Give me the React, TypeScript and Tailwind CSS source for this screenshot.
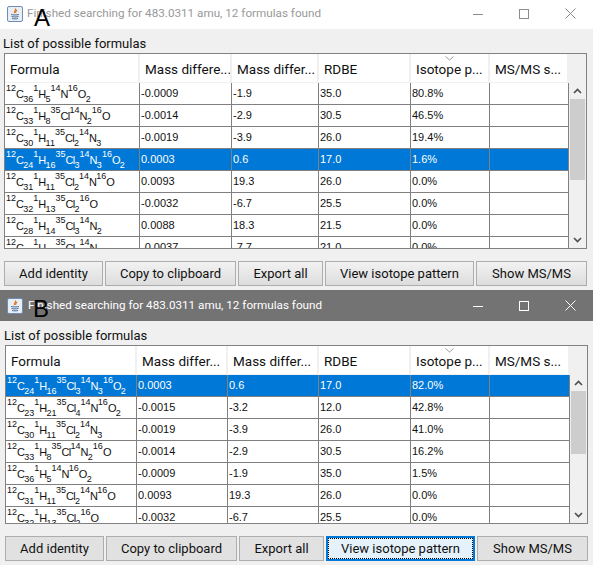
import { ReactNode } from "react";

type Part = [string, string, string?];
type Row = { formula: Part[]; d1: string; d2: string; rdbe: string; iso: string; selected?: boolean };

const F = (s: string): Part[] =>
  s.split(" ").map(p => {
    const [m, e, c] = p.split("-");
    return [m, e, c] as Part;
  });

const rowsA: Row[] = [
  { formula: F("12-C-36 1-H-5 14-N 16-O-2"), d1: "-0.0009", d2: "-1.9", rdbe: "35.0", iso: "80.8%" },
  { formula: F("12-C-33 1-H-8 35-Cl 14-N-2 16-O"), d1: "-0.0014", d2: "-2.9", rdbe: "30.5", iso: "46.5%" },
  { formula: F("12-C-30 1-H-11 35-Cl-2 14-N-3"), d1: "-0.0019", d2: "-3.9", rdbe: "26.0", iso: "19.4%" },
  { formula: F("12-C-24 1-H-16 35-Cl-3 14-N-3 16-O-2"), d1: "0.0003", d2: "0.6", rdbe: "17.0", iso: "1.6%", selected: true },
  { formula: F("12-C-31 1-H-11 35-Cl-2 14-N 16-O"), d1: "0.0093", d2: "19.3", rdbe: "26.0", iso: "0.0%" },
  { formula: F("12-C-32 1-H-13 35-Cl-2 16-O"), d1: "-0.0032", d2: "-6.7", rdbe: "25.5", iso: "0.0%" },
  { formula: F("12-C-28 1-H-14 35-Cl-3 14-N-2"), d1: "0.0088", d2: "18.3", rdbe: "21.5", iso: "0.0%" },
  { formula: F("12-C-29 1-H-16 35-Cl-3 14-N"), d1: "-0.0037", d2: "-7.7", rdbe: "21.0", iso: "0.0%" },
];

const rowsB: Row[] = [
  { formula: F("12-C-24 1-H-16 35-Cl-3 14-N-3 16-O-2"), d1: "0.0003", d2: "0.6", rdbe: "17.0", iso: "82.0%", selected: true },
  { formula: F("12-C-23 1-H-21 35-Cl-4 14-N 16-O-2"), d1: "-0.0015", d2: "-3.2", rdbe: "12.0", iso: "42.8%" },
  { formula: F("12-C-30 1-H-11 35-Cl-2 14-N-3"), d1: "-0.0019", d2: "-3.9", rdbe: "26.0", iso: "41.0%" },
  { formula: F("12-C-33 1-H-8 35-Cl 14-N-2 16-O"), d1: "-0.0014", d2: "-2.9", rdbe: "30.5", iso: "16.2%" },
  { formula: F("12-C-36 1-H-5 14-N 16-O-2"), d1: "-0.0009", d2: "-1.9", rdbe: "35.0", iso: "1.5%" },
  { formula: F("12-C-31 1-H-11 35-Cl-2 14-N 16-O"), d1: "0.0093", d2: "19.3", rdbe: "26.0", iso: "0.0%" },
  { formula: F("12-C-32 1-H-13 35-Cl-2 16-O"), d1: "-0.0032", d2: "-6.7", rdbe: "25.5", iso: "0.0%" },
];

const JavaIcon = () => (
  <svg width="16" height="16" viewBox="0 0 16 16" className="shrink-0">
    <rect x="0.5" y="0.5" width="15" height="15" rx="1.5" fill="#e8eef6" stroke="#6f8db5" />
    <path d="M8.5 2.5c1 1.5-2 2.5-1 4.5M10 4c-1 1-2 1.500-1.200 3" fill="none" stroke="#e2761b" strokeWidth="1.200" />
    <path d="M4 8.500c2 .6 6 .6 8 0M4.500 10.500c2 .6 5 .6 7 0M5 12.500c2 .5 4 .5 6 0" fill="none" stroke="#4a6a94" strokeWidth="1" />
  </svg>
);

const WindowControls = ({ color }: { color: string }) => (
  <div className="flex ml-auto">
    <div className="w-[46px] flex items-center justify-center">
      <svg width="10" height="10" viewBox="0 0 10 10">
        <path d="M0 5.500h10" stroke={color} />
      </svg>
    </div>
    <div className="w-[46px] flex items-center justify-center">
      <svg width="10" height="10" viewBox="0 0 10 10">
        <rect x="0.500" y="0.500" width="9" height="9" fill="none" stroke={color} />
      </svg>
    </div>
    <div className="w-[46px] flex items-center justify-center">
      <svg width="11" height="11" viewBox="0 0 11 11">
        <path d="M.5.500l10 10M10.500.500l-10 10" stroke={color} />
      </svg>
    </div>
  </div>
);

const Formula = ({ parts }: { parts: Part[] }) => (
  <span className="whitespace-nowrap font-['Liberation_Sans',sans-serif] text-[11px] tracking-[-0.700px] leading-none">
    {parts.map(([mass, el, count], i) => (
      <span key={i}>
        <span className="text-[9px] tracking-normal align-[7px] leading-none">{mass}</span>
        <span>{el}</span>
        {count && <span className="text-[9px] tracking-normal align-[-4px] leading-none">{count}</span>}
      </span>
    ))}
  </span>
);

const Chevron = ({ down }: { down?: boolean }) => (
  <svg width="9" height="6" viewBox="0 0 9 6">
    <path d={down ? "M1 1l3.500 3.500L8 1" : "M1 5l3.500-3.500L8 5"} fill="none" stroke="#505050" strokeWidth="1.700" />
  </svg>
);

const HeaderCell = ({ children, sort }: { children: ReactNode; sort?: boolean }) => (
  <div className="relative bg-white border-r-2 border-[#f0f0f0] pl-[5px] pt-[2px] flex items-center overflow-hidden whitespace-nowrap h-[28px]">
    {sort && (
      <svg width="9" height="5" viewBox="0 0 9 5" className="absolute left-[34px] top-[2px]">
        <path d="M.5.500l4 3.500 4-3.500" fill="none" stroke="#9a9a9a" />
      </svg>
    )}
    {children}
  </div>
);

const Cell = ({ children }: { children?: ReactNode }) => (
  <div className="border-r border-[#808080] pl-[1px] flex items-center overflow-hidden">{children}</div>
);

const Table = ({
  rows,
  cols,
  heightClass,
  thumbClass,
  firstHeader,
}: {
  rows: Row[];
  cols: string;
  heightClass: string;
  thumbClass: string;
  firstHeader: string;
}) => (
  <div className={`flex border border-[#828282] bg-[#f0f0f0] ${heightClass}`}>
    <div className="flex-1 min-w-0 overflow-hidden">
      <div className={`grid ${cols} h-[29px] text-[13.500px] text-[#111] font-['Roboto',sans-serif] bg-[#f0f0f0]`}>
        <HeaderCell>Formula</HeaderCell>
        <HeaderCell>{firstHeader}</HeaderCell>
        <HeaderCell>Mass differ...</HeaderCell>
        <HeaderCell>RDBE</HeaderCell>
        <HeaderCell sort>Isotope p...</HeaderCell>
        <HeaderCell>MS/MS s...</HeaderCell>
      </div>
      {rows.map((r, i) => (
        <div
          key={i}
          className={`grid ${cols} h-[22px] border-b border-[#808080] text-[11px] font-['Liberation_Sans',sans-serif] ${
            r.selected ? "bg-[#0078d7] text-white" : "bg-white text-[#111]"
          }`}
        >
          <Cell>
            <Formula parts={r.formula} />
          </Cell>
          <Cell>{r.d1}</Cell>
          <Cell>{r.d2}</Cell>
          <Cell>{r.rdbe}</Cell>
          <Cell>{r.iso}</Cell>
          <Cell />
        </div>
      ))}
    </div>
    <div className="w-[17px] flex flex-col items-center shrink-0">
      <div className="h-[28px] shrink-0" />
      <div className="h-[17px] shrink-0 flex items-center justify-center">
        <Chevron />
      </div>
      <div className={`w-[15px] bg-[#cdcdcd] shrink-0 ${thumbClass}`} />
      <div className="mt-auto h-[17px] shrink-0 flex items-center justify-center">
        <Chevron down />
      </div>
    </div>
  </div>
);

const Button = ({ label, className, focused }: { label: string; className: string; focused?: boolean }) => (
  <div
    className={`${className} h-[25px] flex items-center justify-center text-[13px] text-[#111] font-['Roboto',sans-serif] whitespace-nowrap ${
      focused ? "border-2 border-[#0078d7] bg-[#e5f1fb]" : "border border-[#adadad]"
    }`}
  >
    {focused ? (
      <span className="w-full h-full flex items-center justify-center border border-dotted border-black">{label}</span>
    ) : (
      label
    )}
  </div>
);

const TITLE = "Finished searching for 483.0311 amu, 12 formulas found";
const LABEL = "List of possible formulas";

export default function App() {
  return (
    <div className="w-[593px] h-[565px] overflow-hidden bg-[#f0f0f0] font-['Roboto',sans-serif]">
      {/* window A, inactive */}
      <div className="relative h-[290px] flex flex-col">
        <div className="h-[29px] bg-white flex items-center pl-[7px] pb-[2px] text-[11.700px] text-[#999999]">
          <JavaIcon />
          <span className="ml-[4px]">{TITLE}</span>
          <WindowControls color="#8c8c8c" />
        </div>
        <span className="absolute left-[34px] top-[4px] text-[24px] leading-[28px] text-black font-['Liberation_Sans',sans-serif]">A</span>
        <div className="pl-[4px] pr-[6px]">
          <div className="h-[24px] flex items-center pt-[5px] -ml-[1px] text-[13px] text-[#111]">{LABEL}</div>
          <Table
            rows={rowsA}
            cols="grid-cols-[135px_92px_87px_92px_79px_79px]"
            heightClass="h-[196px]"
            thumbClass="h-[81px]"
            firstHeader="Mass differe..."
          />
          <div className="flex gap-[2px] mt-[12px]">
            <Button className="w-[99px] bg-linear-to-b from-[#f2f2f2] to-[#dddddd]" label="Add identity" />
            <Button className="w-[131px] bg-linear-to-b from-[#f2f2f2] to-[#dddddd]" label="Copy to clipboard" />
            <Button className="w-[85px] bg-linear-to-b from-[#f2f2f2] to-[#dddddd]" label="Export all" />
            <Button className="w-[149px] bg-linear-to-b from-[#f2f2f2] to-[#dddddd]" label="View isotope pattern" />
            <Button className="w-[111px] bg-linear-to-b from-[#f2f2f2] to-[#dddddd]" label="Show MS/MS" />
          </div>
        </div>
      </div>
      {/* window B, active */}
      <div className="relative h-[275px] flex flex-col">
        <div className="h-[31px] bg-[#737373] flex items-center pl-[7px] text-[11.700px] text-white">
          <JavaIcon />
          <span className="ml-[5px]">{TITLE}</span>
          <WindowControls color="#ffffff" />
        </div>
        <span className="absolute left-[33px] top-[5px] text-[24px] leading-[28px] text-black font-['Liberation_Sans',sans-serif]">B</span>
        <div className="pl-[5px] pr-[5px]">
          <div className="h-[24px] flex items-center pt-[5px] -ml-[1px] text-[13px] text-[#111]">{LABEL}</div>
          <Table
            rows={rowsB}
            cols="grid-cols-[131px_91px_91px_92px_79px_80px]"
            heightClass="h-[179px]"
            thumbClass="h-[63px]"
            firstHeader="Mass differ..."
          />
          <div className="flex gap-[2px] mt-[12px]">
            <Button className="w-[99px] bg-[#e1e1e1]" label="Add identity" />
            <Button className="w-[131px] bg-[#e1e1e1]" label="Copy to clipboard" />
            <Button className="w-[85px] bg-[#e1e1e1]" label="Export all" />
            <Button className="w-[149px]" label="View isotope pattern" focused />
            <Button className="w-[111px] bg-[#e1e1e1]" label="Show MS/MS" />
          </div>
        </div>
      </div>
    </div>
  );
}
